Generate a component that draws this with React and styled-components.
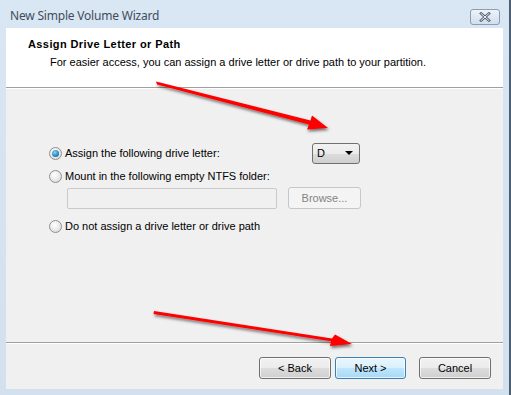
import styled, { createGlobalStyle } from "styled-components";

const GlobalStyle = createGlobalStyle`
  html, body { margin: 0; padding: 0; }
  body { font-family: "Liberation Sans", Arial, sans-serif; font-size: 11px; color: #000; }
`;

const App = () => {
  return (
    <>
      <GlobalStyle />
      <Window>
        <TitleBar>
          <Title>New Simple Volume Wizard</Title>
          <CloseButton>
            <svg width="14" height="10" viewBox="0 0 14 10">
              <path d="M3 1.5 L11 8.5 M11 1.5 L3 8.5" stroke="#4b5b6e" strokeWidth="2.6" strokeLinecap="square" />
              <path d="M3 1.5 L11 8.5 M11 1.5 L3 8.5" stroke="#f4f7fb" strokeWidth="1" strokeLinecap="square" />
            </svg>
          </CloseButton>
        </TitleBar>
        <Client>
          <Header>
            <HeaderTitle>Assign Drive Letter or Path</HeaderTitle>
            <HeaderSub>For easier access, you can assign a drive letter or drive path to your partition.</HeaderSub>
          </Header>
          <Body>
            <OptionRow>
              <Radio checked />
              <Label>Assign the following drive letter:</Label>
              <Select>
                <span>D</span>
                <Caret />
              </Select>
            </OptionRow>
            <OptionRow $top={9}>
              <Radio />
              <Label>Mount in the following empty NTFS folder:</Label>
            </OptionRow>
            <FolderRow>
              <TextBox />
              <PushButton $disabled $width={73}>Browse...</PushButton>
            </FolderRow>
            <OptionRow $top={10}>
              <Radio />
              <Label>Do not assign a drive letter or drive path</Label>
            </OptionRow>
          </Body>
          <Footer>
            <PushButton $width={72}>&lt; Back</PushButton>
            <PushButton $width={71} $default>Next &gt;</PushButton>
            <PushButton $width={72} $gap={13}>Cancel</PushButton>
          </Footer>
        </Client>
        <Arrows width="511" height="395" viewBox="0 0 511 395">
          <defs>
            <filter id="shadow" x="-20%" y="-50%" width="140%" height="200%">
              <feDropShadow dx="1" dy="2" stdDeviation="1.6" floodColor="#000" floodOpacity="0.55" />
            </filter>
          </defs>
          <g filter="url(#shadow)" fill="#ff0000" stroke="none">
            <polygon points="156,81.5 157,84.5 309,124.6 307,129.5 328,128 312,115.5 310.5,120.5" />
            <polygon points="154,311 153.5,314 331,341.2 330,346 352,344 335,334.5 332,338.5" />
          </g>
        </Arrows>
      </Window>
    </>
  );
};

export default App;

const Window = styled.div`
  position: relative;
  width: 511px;
  height: 395px;
  box-sizing: border-box;
  padding: 0 6px 6px 6px;
  background: linear-gradient(180deg, #d9e6f3 0%, #d6e3f1 40%, #d3e1ef 100%);
  border-right: 2px solid #4d5f72;
  display: flex;
  flex-direction: column;
  overflow: hidden;
`;

const TitleBar = styled.div`
  height: 28px;
  display: flex;
  align-items: flex-start;
  justify-content: space-between;
  padding-left: 4px;
`;

const Title = styled.div`
  font-family: "Noto Sans", "Open Sans", sans-serif;
  font-size: 12px;
  color: #3f4d5d;
  margin-top: 7px;
  letter-spacing: -0.2px;
`;

const CloseButton = styled.div`
  width: 30px;
  height: 16px;
  margin-top: 9px;
  margin-right: 3px;
  box-sizing: border-box;
  border: 1px solid #8b9db3;
  border-radius: 3px;
  background: linear-gradient(180deg, #eef3f9 0%, #dfe8f2 50%, #d2dfec 100%);
  display: flex;
  align-items: center;
  justify-content: center;
`;

const Client = styled.div`
  flex: 1;
  background: #f0f0f0;
  display: flex;
  flex-direction: column;
`;

const Header = styled.div`
  height: 60px;
  box-sizing: border-box;
  background: #ffffff;
  border-bottom: 1px solid #a0a0a0;
  padding: 9px 0 0 22px;
`;

const HeaderTitle = styled.div`
  font-weight: bold;
  font-size: 11px;
  line-height: 14px;
  letter-spacing: 0.4px;
`;

const HeaderSub = styled.div`
  margin-top: 4px;
  padding-left: 22px;
  line-height: 14px;
`;

const Body = styled.div`
  flex: 1;
  border-top: 1px solid #ffffff;
  border-bottom: 1px solid #a0a0a0;
  padding: 57px 0 0 43px;
  display: flex;
  flex-direction: column;
`;

const OptionRow = styled.div`
  display: flex;
  align-items: center;
  height: 14px;
  margin-top: ${(p) => p.$top || 0}px;
`;

const Radio = styled.span`
  width: 13px;
  height: 13px;
  box-sizing: border-box;
  border-radius: 50%;
  border: 1px solid #8e8f8f;
  background: radial-gradient(circle at 40% 35%, #ffffff 0%, #e6e6e6 60%, #d2d2d2 100%);
  position: relative;
  flex-shrink: 0;
  &::after {
    content: "";
    display: ${(p) => (p.checked ? "block" : "none")};
    position: absolute;
    left: 2px;
    top: 2px;
    width: 7px;
    height: 7px;
    border-radius: 50%;
    background: radial-gradient(circle at 40% 35%, #8fd3f5 0%, #2b8ac6 55%, #1a4f7a 100%);
  }
`;

const Label = styled.span`
  margin-left: 3px;
  line-height: 14px;
  white-space: nowrap;
`;

const Select = styled.div`
  margin-left: auto;
  margin-right: 143px;
  width: 48px;
  height: 21px;
  box-sizing: border-box;
  border: 1px solid #707070;
  border-radius: 3px;
  background: linear-gradient(180deg, #f2f2f2 0%, #ebebeb 50%, #dddddd 51%, #cfcfcf 100%);
  display: flex;
  align-items: center;
  justify-content: space-between;
  padding: 0 6px 0 4px;
`;

const Caret = styled.span`
  width: 0;
  height: 0;
  border-left: 4px solid transparent;
  border-right: 4px solid transparent;
  border-top: 4px solid #000;
`;

const FolderRow = styled.div`
  display: flex;
  align-items: center;
  margin-top: 4px;
  padding-left: 18px;
  gap: 11px;
`;

const TextBox = styled.div`
  width: 210px;
  height: 21px;
  box-sizing: border-box;
  border: 1px solid #c9c9c9;
  border-radius: 2px;
  background: #f0f0f0;
`;

const PushButton = styled.div`
  width: ${(p) => p.$width}px;
  height: 22px;
  box-sizing: border-box;
  margin-left: ${(p) => (p.$gap ? p.$gap - 4 : 0)}px;
  border: 1px solid ${(p) => (p.$disabled ? "#c7c7c7" : p.$default ? "#3c7fb1" : "#707070")};
  border-radius: 3px;
  background: ${(p) =>
    p.$disabled
      ? "#f4f4f4"
      : p.$default
      ? "linear-gradient(180deg, #eaf6fd 0%, #d9f0fc 50%, #bee6fd 51%, #a7d9f5 100%)"
      : "linear-gradient(180deg, #f2f2f2 0%, #ebebeb 50%, #dddddd 51%, #cfcfcf 100%)"};
  box-shadow: inset 0 0 0 1px ${(p) => (p.$disabled ? "#f4f4f4" : "rgba(255,255,255,0.7)")};
  color: ${(p) => (p.$disabled ? "#838383" : "#000")};
  display: flex;
  align-items: center;
  justify-content: center;
`;

const Footer = styled.div`
  height: 46px;
  box-sizing: border-box;
  border-top: 1px solid #ffffff;
  display: flex;
  justify-content: flex-end;
  align-items: flex-start;
  gap: 4px;
  padding: 13px 12px 0 0;
`;

const Arrows = styled.svg`
  position: absolute;
  left: 0;
  top: 0;
  pointer-events: none;
`;
